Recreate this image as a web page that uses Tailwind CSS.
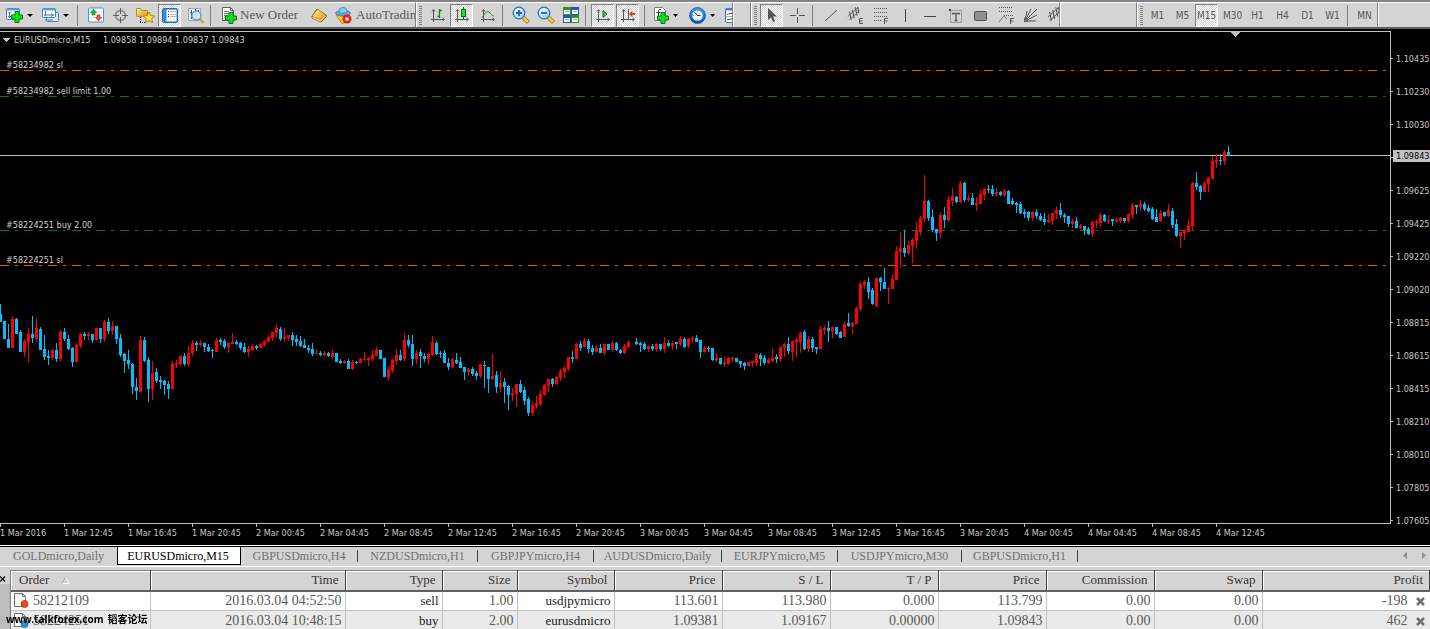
<!DOCTYPE html>
<html lang="en">
<head>
<meta charset="utf-8">
<title>EURUSDmicro,M15</title>
<script src="https://cdn.jsdelivr.net/npm/@tailwindcss/browser@4"></script>
</head>
<body class="flex h-screen flex-col overflow-hidden bg-[#d4d4d4] font-['Liberation_Serif',serif] text-[13px] leading-4 text-[#585858]">

<!-- shared icon parts -->
<svg class="absolute h-0 w-0" aria-hidden="true">
  <defs>
    <linearGradient id="sky" x1="0" y1="0" x2="1" y2="1"><stop offset="0" stop-color="#fff"/><stop offset="1" stop-color="#8cc4ee"/></linearGradient>
    <linearGradient id="gold" x1="0" y1="0" x2="1" y2="1"><stop offset="0" stop-color="#ffe9a0"/><stop offset="1" stop-color="#d89a14"/></linearGradient>
    <linearGradient id="blue" x1="0" y1="0" x2="0" y2="1"><stop offset="0" stop-color="#3c9cf0"/><stop offset="1" stop-color="#0c50b0"/></linearGradient>
    <symbol id="plus" viewBox="0 0 12 12"><path d="M4 .5h4v3.500h3.500v4H8v3.500H4V8H.5V4H4z" fill="#10e020" stroke="#087a10"/></symbol>
    <symbol id="axes" viewBox="0 0 16 16"><path d="M3.500 3v12M1 12.500h13M2 4.500l1.500-2L5 4.500M12.500 11l2 1.500-2 1.500" fill="none" stroke="#555"/></symbol>
    <symbol id="channel" viewBox="0 0 18 18"><path d="M1 12L13 1M3 16L15 5" stroke="#555"/><path d="M3 6l2 10M6.500 4l2 10M10 1l2 10M13 1l1 7" stroke="#555" stroke-width="1.300"/></symbol>
  </defs>
</svg>

<header class="flex h-[29px] shrink-0 overflow-hidden border-t-2 border-b-2 border-t-[#848284] border-b-[#606060]">
  <!-- standard toolbar -->
  <div class="flex w-[416px] shrink-0 items-center overflow-hidden border-t border-r border-t-white border-r-[#808080] pl-[3px]">
    <button aria-label="New chart" class="flex h-[23px] w-9 shrink-0 items-center gap-1 pl-[3px]">
      <svg width="17" height="17"><rect x=".5" y="1.500" width="13" height="11" rx="1" fill="#fff" stroke="#4080c0"/><path d="M1 2.500h12" stroke="#5ca0dc" stroke-width="2"/><path d="M3.500 5v6M2 9.500h10M2.500 6l1-1 1 1" stroke="#4878a8" fill="none"/><use href="#plus" x="5" y="4" width="12" height="12"/></svg>
      <svg width="6" height="3"><path d="M0 0h6L3 3z" fill="#000"/></svg>
    </button>
    <button aria-label="Profiles" class="flex h-[23px] w-9 shrink-0 items-center gap-1 pl-[3px]">
      <svg width="17" height="17"><rect x="4.500" y="5.500" width="12" height="9" rx="1" fill="#dcecfa" stroke="#4080c0"/><rect x=".5" y="1.500" width="13" height="9" rx="1" fill="#fff" stroke="#4080c0"/><path d="M1 2.500h12" stroke="#5ca0dc" stroke-width="2"/><path d="M3.500 4v5M2 8h10M9 6.500l2 1.500-2 1.500M3 13h8" stroke="#4878a8" fill="none"/></svg>
      <svg width="6" height="3"><path d="M0 0h6L3 3z" fill="#000"/></svg>
    </button>
    <span class="h-[21px] w-2 shrink-0 pl-[2px]"><i class="block h-full w-px bg-[#808080]"></i></span>
    <button aria-label="Market watch" class="flex h-[23px] w-[25px] shrink-0 items-center justify-center">
      <svg width="16" height="16"><rect x=".5" y="1" width="15" height="14" rx="1" fill="#fff" stroke="#4a94d8"/><path d="M1 4.500h14M1 7.500h14M1 10.500h14" stroke="#dce8f4"/><path d="M5.500 2l3 3.500H7v2.500H4V5.500H2.500z" fill="#20c030" stroke="#0a7a18" stroke-width=".6"/><path d="M10.500 14l-3-3.500H9V8h3v2.500h1.500z" fill="#ff5030" stroke="#b02808" stroke-width=".6"/></svg>
    </button>
    <button aria-label="Data window" class="flex h-[23px] w-[25px] shrink-0 items-center justify-center">
      <svg width="15" height="15"><circle cx="7.500" cy="7.500" r="5" fill="none" stroke="#808080" stroke-width="1.500"/><path d="M7.500 0v6M7.500 9v6M0 7.500h6M9 7.500h6" stroke="#606060"/></svg>
    </button>
    <button aria-label="Navigator" class="flex h-[23px] w-[25px] shrink-0 items-center justify-center">
      <svg width="19" height="17"><path d="M.5 1.500h4l1 2h6v6H.5z" fill="url(#gold)" stroke="#b89018"/><path d="M4.500 10v6M4 15.500h5" stroke="#222" stroke-dasharray="1 1"/><path d="M13 5l1.700 3.500 3.800.5-2.800 2.600.8 3.900-3.500-1.800-3.500 1.800.8-3.900L7.500 9l3.800-.5z" fill="#ffe050" stroke="#b88000"/></svg>
    </button>
    <span class="w-[25px] shrink-0">
      <button aria-label="Terminal" aria-pressed="true" class="flex h-[23px] w-[23px] items-center justify-center border border-t-[#808080] border-r-white border-b-white border-l-[#808080] bg-[repeating-conic-gradient(#ffffff_0_25%,#d4d4d4_0_50%)] bg-size-[2px_2px]">
        <svg width="16" height="15"><rect x=".7" y=".7" width="14.600" height="13.600" rx="1.500" fill="#fff" stroke="#1870c8" stroke-width="1.400"/><path d="M1 1h3.500v13H1z" fill="#3888d8"/><path d="M6 3.500h1M6 6.500h1" stroke="#e03020"/><path d="M6 8.500h1" stroke="#222"/><path d="M8 3.500h6M8 6.500h6M8 8.500h6" stroke="#a8bcd8"/></svg>
      </button>
    </span>
    <button aria-label="Strategy tester" class="flex h-[23px] w-[25px] shrink-0 items-center justify-center">
      <svg width="18" height="17"><rect x="1.500" y="1.500" width="12" height="12" fill="#f2f2f2" stroke="#99aabb"/><path d="M4.500 3v9M3 5.500h2M8.500 2v6M11.500 3v4" stroke="#555"/><path d="M12 11l4.500 5" stroke="#d8a020" stroke-width="2.500"/><circle cx="9.500" cy="8.500" r="4.500" fill="#c8e4fa" fill-opacity=".85" stroke="#5c9ccc" stroke-width="1.300"/></svg>
    </button>
    <span class="h-[21px] w-2 shrink-0 pl-[2px]"><i class="block h-full w-px bg-[#808080]"></i></span>
    <button class="flex h-[23px] w-[90px] shrink-0 items-center gap-[3px] pl-[5px] whitespace-nowrap">
      <svg width="16" height="18"><path d="M1.500 1.500h8l3 3v10h-11z" fill="#fff" stroke="#606060"/><path d="M9.500 1.500v3h3" fill="none" stroke="#606060"/><path d="M3 5.500h5M3 7.500h7M3 9.500h4M3 11.500h3" stroke="#777"/><use href="#plus" x="4" y="6" width="12" height="12"/></svg>
      New Order
    </button>
    <button aria-label="MetaEditor" class="flex h-[23px] w-[25px] shrink-0 items-center justify-center">
      <svg width="16" height="16"><path d="M1 9l5-7 9 6v2l-5 5-9-4z" fill="#c88408" stroke="#906008"/><path d="M1.500 9l5-6.500 8 5.500-5 5z" fill="url(#gold)"/><path d="M1.500 10.500l8 3.500 5-5" fill="none" stroke="#fff0b8"/></svg>
    </button>
    <button class="flex h-[23px] w-[90px] shrink-0 items-center gap-1 pl-1 whitespace-nowrap">
      <svg class="shrink-0" width="17" height="17"><path d="M1 8l7 1.500 7-1.500-3 7-5 1.500z" fill="#f4c838" stroke="#b88810"/><ellipse cx="8" cy="6" rx="7.500" ry="2.500" fill="#5cacdc" stroke="#2878a8" stroke-width=".7"/><ellipse cx="8" cy="3.500" rx="4" ry="3" fill="#88ccf0" stroke="#2878a8" stroke-width=".7"/><circle cx="12" cy="12" r="4.500" fill="#e02810"/><rect x="10.500" y="10.500" width="3" height="3" fill="#fff"/></svg>
      AutoTrading
    </button>
  </div>

  <!-- charts toolbar -->
  <div class="flex w-[317px] shrink-0 items-center overflow-hidden border-t border-r border-l border-t-white border-r-[#808080] border-l-white">
    <span class="h-[19px] w-2 shrink-0 pl-[2px]"><i class="block h-full w-[3px] bg-[repeating-linear-gradient(#808080_0_1px,#d4d4d4_1px_2px)]"></i></span>
    <button aria-label="Bar chart" class="flex h-[23px] w-[25px] shrink-0 items-center justify-center">
      <svg width="16" height="16"><use href="#axes" width="16" height="16"/><path d="M9.500 2v9M9.500 3.500H12M7.500 9.500h2" stroke="#108020" stroke-width="1.300"/></svg>
    </button>
    <button aria-label="Candlesticks" aria-pressed="true" class="mr-[2px] flex h-[23px] w-[23px] shrink-0 items-center justify-center border border-t-[#808080] border-r-white border-b-white border-l-[#808080] bg-[repeating-conic-gradient(#ffffff_0_25%,#d4d4d4_0_50%)] bg-size-[2px_2px]">
      <svg width="16" height="16"><use href="#axes" width="16" height="16"/><path d="M9.500 0v13" stroke="#087010"/><rect x="7.500" y="2.500" width="4" height="7" fill="#20e030" stroke="#087010"/></svg>
    </button>
    <button aria-label="Line chart" class="flex h-[23px] w-[25px] shrink-0 items-center justify-center">
      <svg width="16" height="16"><use href="#axes" width="16" height="16"/><path d="M2 11c3-6 6-8 8-5 1 1.500 2 2.500 4 3" fill="none" stroke="#209030"/></svg>
    </button>
    <span class="h-[21px] w-2 shrink-0 pl-[2px]"><i class="block h-full w-px bg-[#808080]"></i></span>
    <button aria-label="Zoom in" class="flex h-[23px] w-[25px] shrink-0 items-center justify-center">
      <svg width="18" height="18"><path d="M11 11l5.500 5.500" stroke="#9c7410" stroke-width="4"/><path d="M11 11l5 5" stroke="#f4cc40" stroke-width="2.500"/><circle cx="7" cy="7" r="5.800" fill="url(#sky)" stroke="#2878b8" stroke-width="1.300"/><path d="M4 7h6M7 4v6" stroke="#2068a0" stroke-width="1.800"/></svg>
    </button>
    <button aria-label="Zoom out" class="flex h-[23px] w-[25px] shrink-0 items-center justify-center">
      <svg width="18" height="18"><path d="M11 11l5.500 5.500" stroke="#9c7410" stroke-width="4"/><path d="M11 11l5 5" stroke="#f4cc40" stroke-width="2.500"/><circle cx="7" cy="7" r="5.800" fill="url(#sky)" stroke="#2878b8" stroke-width="1.300"/><path d="M4 7h6" stroke="#2068a0" stroke-width="1.800"/></svg>
    </button>
    <button aria-label="Tile windows" class="flex h-[23px] w-[25px] shrink-0 items-center justify-center">
      <svg width="16" height="16"><path d="M0 0h8v8H0zM8 8h8v8H8z" fill="#38901c"/><path d="M8 0h8v8H8zM0 8h8v8H0z" fill="#2058b8"/><path d="M1 3h6v4H1zM9 3h6v4H9zM1 11h6v4H1zM9 11h6v4H9z" fill="#fff"/><path d="M2 4.500h4M10 4.500h4M2 12.500h4M10 12.500h4" stroke="#90b0d8"/></svg>
    </button>
    <span class="h-[21px] w-2 shrink-0 pl-[2px]"><i class="block h-full w-px bg-[#808080]"></i></span>
    <button aria-label="Auto scroll" aria-pressed="true" class="mr-[2px] flex h-[23px] w-[23px] shrink-0 items-center justify-center border border-t-[#808080] border-r-white border-b-white border-l-[#808080] bg-[repeating-conic-gradient(#ffffff_0_25%,#d4d4d4_0_50%)] bg-size-[2px_2px]">
      <svg width="16" height="16"><use href="#axes" width="16" height="16"/><path d="M8 3.500v7L12 7z" fill="#40d050" stroke="#087010"/></svg>
    </button>
    <button aria-label="Chart shift" aria-pressed="true" class="mr-[2px] flex h-[23px] w-[23px] shrink-0 items-center justify-center border border-t-[#808080] border-r-white border-b-white border-l-[#808080] bg-[repeating-conic-gradient(#ffffff_0_25%,#d4d4d4_0_50%)] bg-size-[2px_2px]">
      <svg width="16" height="16"><use href="#axes" width="16" height="16"/><path d="M8.500 2v10" stroke="#555"/><path d="M9.500 7L12 4.500v2h3v1h-3v2z" fill="#d84010" stroke="#c03008" stroke-width=".7"/></svg>
    </button>
    <span class="h-[21px] w-[9px] shrink-0 pl-[3px]"><i class="block h-full w-px bg-[#808080]"></i></span>
    <button aria-label="Indicators" class="flex h-[23px] w-9 shrink-0 items-center gap-1 pl-[3px]">
      <svg width="16" height="18"><path d="M1.500 1.500h8l3 3v10h-11z" fill="#fff" stroke="#808080"/><path d="M8 3.500c-2-.5-2.500.5-2.500 2V12M3.500 6.500h4" fill="none" stroke="#222"/><use href="#plus" x="4" y="6" width="12" height="12"/></svg>
      <svg width="5" height="3"><path d="M0 0h5L2.500 3z" fill="#000"/></svg>
    </button>
    <button aria-label="Periodicity" class="flex h-[23px] w-9 shrink-0 items-center gap-1 pl-[3px]">
      <svg width="17" height="17"><circle cx="8.500" cy="8.500" r="8" fill="url(#blue)" stroke="#084090" stroke-width=".6"/><circle cx="8.500" cy="8.500" r="5.300" fill="#eaf4ff"/><path d="M5.500 5l3 3.500h3" fill="none" stroke="#203050"/><path d="M8.500 3.500v1M8.500 12.500v1M3.500 8.500h1" stroke="#6080a0"/></svg>
      <svg width="5" height="3"><path d="M0 0h5L2.500 3z" fill="#000"/></svg>
    </button>
    <button aria-label="Templates" class="flex h-[23px] w-[22px] shrink-0 items-center pl-[3px]">
      <svg width="16" height="15"><rect x=".5" y=".5" width="15" height="14" rx="1" fill="#fff" stroke="#2878c8"/><path d="M1 1.500h14" stroke="#3888d8" stroke-width="2"/><path d="M2 6.500l3-1h4" fill="none" stroke="#d03010"/><path d="M2 11.500h3l4-1.500" fill="none" stroke="#108020"/><path d="M1 8.500h14" stroke="#90b8e0"/></svg>
    </button>
  </div>
  <div class="w-[18px] shrink-0 border-t border-r border-l border-t-white border-r-[#808080] border-l-white"></div>

  <!-- line studies toolbar -->
  <div class="flex w-[309px] shrink-0 items-center overflow-hidden border-t border-r border-l border-t-white border-r-[#808080] border-l-white">
    <span class="h-[19px] w-2 shrink-0 pl-[2px]"><i class="block h-full w-[3px] bg-[repeating-linear-gradient(#808080_0_1px,#d4d4d4_1px_2px)]"></i></span>
    <button aria-label="Cursor" aria-pressed="true" class="mr-[2px] flex h-[23px] w-[23px] shrink-0 items-center justify-center border border-t-[#808080] border-r-white border-b-white border-l-[#808080] bg-[repeating-conic-gradient(#ffffff_0_25%,#d4d4d4_0_50%)] bg-size-[2px_2px]">
      <svg width="16" height="16"><path d="M4 1v12l3-2.500L9 15l2-1-2-4.500h4z" fill="#555"/></svg>
    </button>
    <button aria-label="Crosshair" class="flex h-[23px] w-[25px] shrink-0 items-center justify-center">
      <svg width="15" height="15"><path d="M7.500 0v6M7.500 9v6M0 7.500h6M9 7.500h6" stroke="#555"/></svg>
    </button>
    <span class="h-[21px] w-2 shrink-0 pl-[2px]"><i class="block h-full w-px bg-[#808080]"></i></span>
    <button aria-label="Trendline" class="flex h-[23px] w-[25px] shrink-0 items-center justify-center">
      <svg width="14" height="14"><path d="M1 13L13 2" stroke="#555"/></svg>
    </button>
    <button aria-label="Equidistant channel" class="flex h-[23px] w-[25px] shrink-0 items-center justify-center">
      <svg width="18" height="18"><use href="#channel" width="15" height="16"/><path d="M16 12.500h-3.500v5H16M12.500 15h3" fill="none" stroke="#555"/></svg>
    </button>
    <button aria-label="Fibonacci retracement" class="flex h-[23px] w-[25px] shrink-0 items-center justify-center">
      <svg width="18" height="18"><path d="M2 2.500h13M2 6.500h13M2 10.500h13M2 14.500h8" stroke="#555" stroke-dasharray="1 1"/><path d="M16 12.500h-3.500v5.500M12.500 15h3" fill="none" stroke="#555"/></svg>
    </button>
    <button aria-label="Vertical line" class="flex h-[23px] w-[25px] shrink-0 items-center justify-center">
      <svg width="15" height="15"><path d="M7.500 1v13" stroke="#444"/></svg>
    </button>
    <button aria-label="Horizontal line" class="flex h-[23px] w-[25px] shrink-0 items-center justify-center">
      <svg width="15" height="15"><path d="M1 8.500h12" stroke="#444"/></svg>
    </button>
    <button aria-label="Text label" class="flex h-[23px] w-[25px] shrink-0 items-center justify-center">
      <svg width="15" height="15"><rect x="2.500" y="2.500" width="11" height="12" fill="none" stroke="#666" stroke-dasharray="1 1"/><path d="M1 1h2v2H1z" fill="#444"/><path d="M4.500 6.500v-1h7v1M8 5.500v7M6.500 12.500h3" fill="none" stroke="#555" stroke-width="1.300"/></svg>
    </button>
    <button aria-label="Rectangle" class="flex h-[23px] w-[25px] shrink-0 items-center justify-center">
      <svg width="15" height="13"><rect x="1.500" y="2.500" width="12" height="9" rx="1" fill="#909090" stroke="#505050"/></svg>
    </button>
    <button aria-label="Fibonacci expansion" class="flex h-[23px] w-[25px] shrink-0 items-center justify-center">
      <svg width="18" height="18"><path d="M2 1.500h14M2 5.500h14M7 9.500h9" stroke="#555" stroke-dasharray="1 1"/><path d="M2 16l5-6 3 3" fill="none" stroke="#777"/><path d="M17 12.500h-3.500v5.500M13.500 15h3" fill="none" stroke="#555"/></svg>
    </button>
    <button aria-label="Fibonacci fan" class="flex h-[23px] w-[25px] shrink-0 items-center justify-center">
      <svg width="16" height="16"><path d="M2 14L4 4M2 14L8 2M2 14L14 2M2 14L14 8M2 14h11" stroke="#555"/><path d="M1 15V10l5 5z" fill="#666"/></svg>
    </button>
    <button aria-label="Andrews pitchfork" class="flex h-[23px] w-[25px] shrink-0 items-center pl-1">
      <svg class="shrink-0" width="18" height="18"><use href="#channel" width="16" height="17"/></svg>
    </button>
  </div>
  <div class="w-[77px] shrink-0 border-t border-r border-l border-t-white border-r-[#808080] border-l-white"></div>

  <!-- timeframes toolbar -->
  <div class="flex w-[241px] shrink-0 items-center border-t border-r border-l border-t-white border-r-[#808080] border-l-white font-['DejaVu_Sans_Condensed','Noto_Sans',sans-serif] text-[10px]">
    <span class="h-[19px] w-[7px] shrink-0 pl-[2px]"><i class="block h-full w-[3px] bg-[repeating-linear-gradient(#808080_0_1px,#d4d4d4_1px_2px)]"></i></span>
    <button class="h-[23px] w-[25px] shrink-0 pt-[2px]">M1</button>
    <button class="h-[23px] w-[25px] shrink-0 pt-[2px]">M5</button>
    <button aria-pressed="true" class="mr-[2px] flex h-[23px] w-[23px] shrink-0 items-center justify-center border border-t-[#808080] border-r-white border-b-white border-l-[#808080] bg-[repeating-conic-gradient(#ffffff_0_25%,#d4d4d4_0_50%)] bg-size-[2px_2px] pt-[2px]">M15</button>
    <button class="h-[23px] w-[25px] shrink-0 pt-[2px]">M30</button>
    <button class="h-[23px] w-[25px] shrink-0 pt-[2px]">H1</button>
    <button class="h-[23px] w-[25px] shrink-0 pt-[2px]">H4</button>
    <button class="h-[23px] w-[25px] shrink-0 pt-[2px]">D1</button>
    <button class="h-[23px] w-[25px] shrink-0 pt-[2px]">W1</button>
    <span class="h-[21px] w-2 shrink-0 pl-[2px]"><i class="block h-full w-px bg-[#808080]"></i></span>
    <button class="h-[23px] w-[23px] shrink-0 pt-[2px]">MN</button>
  </div>
  <div class="flex-1 border-t border-l border-white"></div>
</header>

<!-- chart window -->
<main class="flex shrink-0 bg-black pt-[2px] font-['DejaVu_Sans_Condensed','Noto_Sans',sans-serif] text-[9px] text-[#c8c8c8]">
  <div class="min-w-0 flex-1">
    <div class="border-t border-r border-b border-[#c0c0c0]">
      <svg class="block h-[491px] w-full" role="img" aria-label="EURUSDmicro M15 candlestick chart">
        <g transform="translate(0,-32)" shape-rendering="crispEdges">
          <path d="M3 38h7l-3.500 4z" fill="#c8c8c8"/>
          <path d="M1231 32h9l-4.500 5z" fill="#c0c0c0"/>
          <path d="M0 70.500h1386M0 265.500h1386" stroke="#ff4500" stroke-dasharray="9 6 3 6"/>
          <path d="M0 96.500h1386M0 230.500h1386" stroke="#008000" stroke-dasharray="9 6 3 6"/>
          <path d="M0 155.500h4000" stroke="#c0c0c0"/>
          <path id="up" fill="#ff0000"/>
          <path id="down" fill="#00bfff"/>
        </g>
        <g transform="translate(0,-32)" fill="#d0d0d0">
          <text x="14" y="43">EURUSDmicro,M15</text>
          <text x="103" y="43">1.09858 1.09894 1.09837 1.09843</text>
          <text x="6" y="68">#58234982 sl</text>
          <text x="6" y="94">#58234982 sell limit 1.00</text>
          <text x="6" y="228">#58224251 buy 2.00</text>
          <text x="6" y="263">#58224251 sl</text>
        </g>
      </svg>
    </div>
    <div id="times" class="flex h-[21px] overflow-hidden whitespace-nowrap"></div>
  </div>
  <div class="relative w-[39px] shrink-0 overflow-hidden pt-[11px]">
    <div id="prices"></div>
    <div class="absolute top-[119px] right-0 left-[2px] h-3 bg-[#c0c0c0] pl-[3px] leading-3 text-black">1.09843</div>
  </div>
</main>

<!-- chart tabs -->
<nav class="flex h-[22px] shrink-0 border-t border-b border-t-white border-b-white text-[12px] text-[#707070]">
  <div class="flex h-[19px] flex-1 items-start border-t border-black whitespace-nowrap">
    <button class="h-[17px] w-[117px] shrink-0">GOLDmicro,Daily</button>
    <button class="-mt-px h-[19px] w-[124px] shrink-0 border border-black bg-white pr-[2px] text-black">EURUSDmicro,M15</button>
    <button class="mt-[3px] h-3 w-[117px] shrink-0 border-r border-[#404040] leading-3">GBPUSDmicro,H4</button>
    <button class="mt-[3px] h-3 w-[120px] shrink-0 border-r border-[#404040] leading-3">NZDUSDmicro,H1</button>
    <button class="mt-[3px] h-3 w-[116px] shrink-0 border-r border-[#404040] leading-3">GBPJPYmicro,H4</button>
    <button class="mt-[3px] h-3 w-[128px] shrink-0 border-r border-[#404040] leading-3">AUDUSDmicro,Daily</button>
    <button class="mt-[3px] h-3 w-[116px] shrink-0 border-r border-[#404040] leading-3">EURJPYmicro,M5</button>
    <button class="mt-[3px] h-3 w-[124px] shrink-0 border-r border-[#404040] leading-3">USDJPYmicro,M30</button>
    <button class="mt-[3px] h-3 w-[116px] shrink-0 border-r border-[#404040] leading-3">GBPUSDmicro,H1</button>
    <div class="ml-auto flex gap-[15px] pt-[5px] pr-1">
      <button aria-label="Scroll left"><svg class="block" width="4" height="7"><path d="M4 0v7L0 3.500z" fill="#909090"/></svg></button>
      <button aria-label="Scroll right"><svg class="block" width="4" height="7"><path d="M0 0v7l4-3.500z" fill="#909090"/></svg></button>
    </div>
  </div>
</nav>

<!-- terminal -->
<section class="flex min-h-0 flex-1 overflow-hidden pt-[3px]">
  <div class="w-[11px] shrink-0 border-r border-[#808080]">
    <button aria-label="Close terminal" class="block h-[14px] pt-1"><svg class="block" width="6" height="6"><path d="M0 .5l5 5M5 .5l-5 5" stroke="#000" stroke-width="1.200"/></svg></button>
    <div class="h-full bg-[#bcbcbc]"></div>
  </div>
  <table class="w-full table-fixed self-start border-collapse whitespace-nowrap text-right text-[14px] leading-4">
    <colgroup><col class="w-[139px]"><col class="w-[195px]"><col class="w-[97px]"><col class="w-[75px]"><col class="w-[97px]"><col class="w-[108px]"><col class="w-[108px]"><col class="w-[108px]"><col class="w-[108px]"><col class="w-[108px]"><col class="w-[108px]"><col></colgroup>
    <thead id="head" class="text-[13px] text-[#403434]"></thead>
    <tbody id="rows"></tbody>
  </table>
</section>

<!-- site mark -->
<div class="fixed bottom-0 left-[6px] flex h-5 items-center gap-1 font-['Noto_Sans','Noto_Sans_CJK_SC',sans-serif] text-[10px] font-bold whitespace-nowrap text-black"><span>www.talkforex.com</span><span>韬客论坛</span></div>

<script>
// Candles every 4px: high, body top, body bottom, low (y), colour. Null is a gap.
const data = `304,314,322,322B 321,321,339,339B 324,339,348,348B 317,319,348,348R 318,319,334,334B 330,332,352,352B 339,341,352,357R 328,334,342,362R 316,334,338,343B 318,328,339,342R
327,329,350,350B 335,349,357,360B 350,356,358,365B 349,350,358,360R 343,350,359,362B 330,332,359,361R 328,332,339,341B 335,339,349,350B 347,348,362,367B 343,345,362,362R
333,334,346,348R 332,334,336,340B 332,334,336,340R 334,334,340,343B 328,328,340,340R 328,328,339,343B 320,322,339,342R 318,322,331,334B 321,326,331,335R 326,326,339,344B
334,338,355,357B 353,354,361,373B 350,360,364,369B 363,364,387,394B 378,387,391,400B 336,340,392,393R 337,340,361,362B 357,360,389,402B 361,373,389,400R 368,372,381,383B
376,380,382,389B 380,381,385,395B 381,384,389,399B 361,364,389,389R 360,363,365,368R 355,356,364,366R 353,356,364,366B 346,353,364,367R 340,343,353,356R 341,343,345,351B
340,343,345,347R 343,343,347,352B 344,347,351,352B 349,350,351,358B 338,340,352,352R 338,340,342,345B 339,341,347,349B 343,343,347,353R 333,342,344,344R 340,342,344,345B
342,343,348,350B 343,347,352,353B 346,349,352,357R 344,346,350,351R 345,346,348,350B 343,344,348,348R 340,341,345,347R 335,337,342,342R 332,332,338,341R 324,328,333,338R
327,329,339,341B 328,337,339,342R 335,335,338,341R 332,335,340,346B 335,339,342,346B 336,341,346,347B 339,345,348,348B 345,348,350,353B 343,349,354,356B 349,353,354,354R
351,353,355,356B 351,353,355,356R 352,353,356,357B 350,353,357,359R 353,353,362,362B 359,361,363,364B 360,361,363,364R 359,361,369,369B 360,362,369,370R 361,362,363,364B
358,359,363,363R 352,359,360,361R 357,358,360,366R 350,355,359,361R 347,350,356,356R 350,350,359,359B 358,358,377,377B 366,370,377,381R 359,360,371,373R 349,355,361,365R
350,355,360,361B 333,340,359,361R 335,340,345,347B 335,344,359,366B 350,353,359,364R 349,352,356,368B 353,356,359,362B 353,354,359,364R 336,342,355,356R 341,343,354,355B
351,353,354,358B 350,353,363,363B 358,363,367,370B 359,359,367,368R 353,360,363,364B 357,362,368,368B 367,367,372,380B 368,369,372,376R 367,369,374,376B 371,373,376,380B
364,364,376,378R 361,365,366,388B 367,367,379,393B 354,376,379,380R 371,375,387,393B 371,383,387,392R 378,382,387,403B 385,386,395,410B 388,393,395,401R 384,384,394,407R
380,384,392,393B 387,390,401,405B 397,399,413,416B 402,405,413,416R 396,403,406,409R 390,394,404,406R 384,385,395,396R 379,379,386,392R 378,379,384,387B 376,377,384,385R
369,371,378,381R 366,368,372,378R 357,357,369,371R 351,357,359,363B 343,344,359,359R 341,344,348,351B 338,341,347,348R 339,341,349,353B 345,348,352,355B 345,348,352,352R
344,348,353,353B 344,344,353,355R 344,344,350,350B 341,343,350,352R 342,343,350,351B 349,350,353,354B 344,346,353,354R 340,342,347,348R null 338,342,344,345B
342,343,345,352B 342,344,349,350B 346,346,349,352R 344,346,349,351B 343,344,349,352R 344,344,349,351B 337,343,349,353R 340,343,346,347B 341,343,346,350R 342,342,344,349B
336,339,344,346R 337,339,347,348B 338,339,346,348R 336,338,339,343R 335,338,342,342B 340,340,352,358B 346,348,352,353R 346,348,349,352B 348,348,360,361B 353,358,360,362R
358,358,364,365B 357,363,364,367R 357,358,364,365R 357,358,359,362R 358,358,362,362B 361,361,364,368B 362,363,366,370B 362,362,366,366R 361,361,363,367R 353,354,363,366R
353,355,359,366B 355,358,363,365B 358,360,363,364R 348,358,361,362R 354,357,359,363B 347,347,359,362R 343,344,348,357R 337,344,351,354B 341,341,352,361R 338,340,342,357R
332,333,342,353R 330,332,349,350B 336,339,349,352R 337,339,348,352B 347,347,349,354B 326,329,349,349R 326,328,330,335R 321,328,331,342B 327,327,331,338R 327,327,334,335B
331,332,338,338B 322,324,337,337R 313,323,326,327B 322,323,326,334R 307,308,324,324R 282,284,309,311R 280,282,285,289R 277,282,292,299B 288,290,304,305B 277,278,306,307R
277,278,282,291B 268,282,289,289B 287,288,289,304R 274,279,289,289R 246,251,280,280R 232,248,252,268R 230,248,253,257B 241,245,253,255R 238,240,246,263R 222,231,241,249R
216,218,232,236R 175,201,219,222R 200,201,218,221B 209,217,230,232B 229,229,233,241B 213,215,233,238R 207,215,220,228B 196,200,220,222R 188,196,201,206R 196,197,202,203B
181,183,202,203R 182,183,200,202B 195,198,200,202R 193,198,205,205B 197,203,205,211R 190,194,204,204R 188,189,195,200R 185,189,190,193B 185,189,194,196B 188,192,194,196R
191,192,195,196B 189,191,195,197R 190,191,204,204B 198,201,204,205B 202,203,205,213B 202,204,213,214B 209,212,214,218B 211,212,218,221B 211,212,218,221R 209,212,216,219B
213,216,220,221B 213,219,222,225B 214,220,222,223R 213,213,221,225R 206,210,214,219R 203,210,215,218B 213,215,217,223B 216,216,224,227B 219,221,224,228R 217,221,228,228B
224,226,228,229R 226,226,230,235B 227,229,234,235B 221,222,234,237R 220,221,223,228R 213,215,223,227R 214,215,221,222B 215,220,221,224R 219,219,221,226B 218,220,221,222R
217,218,221,223R 218,218,221,223B 214,214,221,223R 203,205,215,219R 205,205,207,214B 200,204,207,211R 202,204,209,211B 205,208,211,212B 207,209,219,220B 209,217,222,222B
210,213,221,222R 212,212,216,217B 204,210,216,217R 208,211,225,228B 219,224,236,237B 232,232,236,248R 230,230,233,240R 219,225,232,232R 182,183,226,231R 172,183,187,190B
185,186,192,200B 181,183,192,192R 177,178,184,192R 156,161,179,179R 154,160,162,168R 154,160,161,165B 150,152,161,165R 146,152,156,156B`;
const shape = { R: '', B: '' };
data.split(/\s+/).forEach((c, i) => {
  if (c === 'null') return;
  const [h, t, b, l] = c.slice(0, -1).split(',').map(Number), x = i * 4;
  shape[c.slice(-1)] += `M${x} ${h}h1V${l}h-1zM${x - 1} ${t}h3V${b}h-3z`;
});
document.getElementById('up').setAttribute('d', shape.R);
document.getElementById('down').setAttribute('d', shape.B);

const times = ['1 Mar 2016', '1 Mar 12:45', '1 Mar 16:45', '1 Mar 20:45'];
for (const d of [2, 3, 4]) for (const h of ['00', '04', '08', '12', '16', '20']) if (d < 4 || h < '16') times.push(`${d} Mar ${h}:45`);
document.getElementById('times').innerHTML = times.map(t => `<div class="w-16 shrink-0"><i class="block h-[3px] w-px bg-[#c0c0c0]"></i><span class="block leading-3">${t}</span></div>`).join('');

const prices = ['1.10435', '1.10230', '1.10030', '', '1.09625', '1.09425', '1.09220', '1.09020', '1.08815', '1.08615', '1.08415', '1.08210', '1.08010', '1.07805', '1.07605'];
document.getElementById('prices').innerHTML = prices.map(p => `<div class="flex h-[33px] items-center gap-[3px]"><i class="h-px w-[2px] bg-[#c0c0c0]"></i>${p}</div>`).join('');

const heads = ['Order', 'Time', 'Type', 'Size', 'Symbol', 'Price', 'S / L', 'T / P', 'Price', 'Commission', 'Swap', 'Profit'];
document.getElementById('head').innerHTML = '<tr>' + heads.map((h, i) => {
  const edge = i ? 'pr-[6px] text-right' : 'pl-2 text-left';
  const sort = i ? '' : '<svg class="ml-3 inline-block align-baseline" width="9" height="7"><path d="M.5 6.500L4.500.5l4 6z" fill="none" stroke="#fff"/><path d="M.5 6.500L4.500.5" stroke="#909090"/></svg>';
  return `<th class="h-5 border-t border-r border-b-2 border-t-[#808080] border-r-[#404040] border-b-[#606060] p-0 font-normal shadow-[inset_1px_1px_0_#ffffff] ${edge}">${h}${sort}</th>`;
}).join('') + '</tr>';

const rows = [
  ['58212109', '2016.03.04 04:52:50', 'sell', '1.00', 'usdjpymicro', '113.601', '113.980', '0.000', '113.799', '0.00', '0.00', '-198'],
  ['58224251', '2016.03.04 10:48:15', 'buy', '2.00', 'eurusdmicro', '1.09381', '1.09167', '0.00000', '1.09843', '0.00', '0.00', '462'],
];
const close = '<button aria-label="Close order" class="ml-2 align-middle"><svg class="block" width="9" height="9"><path d="M1 1l7 7M8 1L1 8" stroke="#707070" stroke-width="2.500"/></svg></button>';
document.getElementById('rows').innerHTML = rows.map((r, n) => `<tr class="${n ? 'bg-[#eaeaea]' : 'bg-white'}">` + r.map((v, i) => {
  if (!i) return `<td class="h-5 border-r border-b border-[#c0c0c0] p-0 pl-[3px] text-left"><span class="flex items-center gap-1"><svg width="15" height="15"><path d="M.5.5h8l3 3v10H.5z" fill="#fff" stroke="#707070"/><path d="M8.500.5v3h3" fill="none" stroke="#707070"/><circle cx="10.500" cy="11" r="3.500" fill="${n ? '#2090e8' : '#f04818'}" stroke="${n ? '#105090' : '#a02808'}" stroke-width=".7"/></svg>${v}</span></td>`;
  if (i === 11) return `<td class="h-5 border-b border-[#c0c0c0] p-0 pr-[5px]">${v}${close}</td>`;
  const word = i === 2 || i === 4;
  return `<td class="h-5 border-r border-b border-[#c0c0c0] p-0 pr-[3px] ${word ? 'text-[13px] text-[#202020]' : ''}">${v}</td>`;
}).join('') + '</tr>').join('');
</script>
</body>
</html>
